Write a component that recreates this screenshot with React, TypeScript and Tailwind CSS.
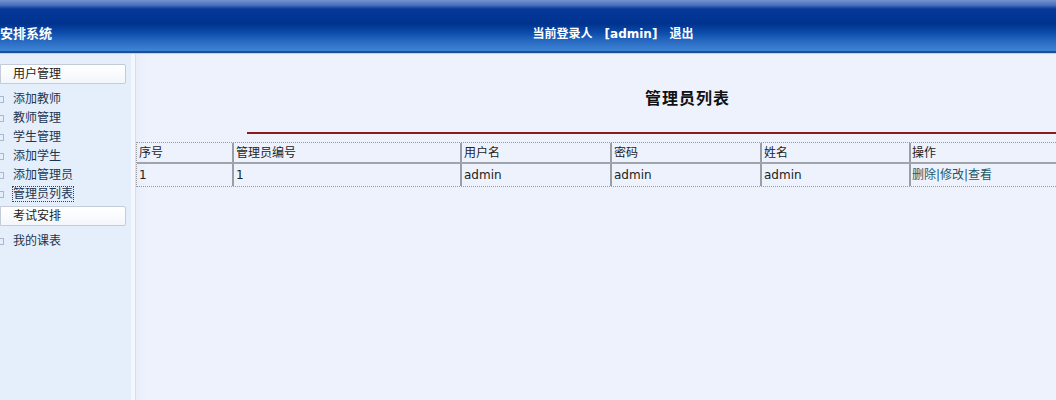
import React from "react";

const font = { fontFamily: '"DejaVu Sans", "Noto Sans CJK SC", sans-serif' };

function Bullet() {
  return <span className="inline-block w-[4px] h-[7px] border border-l-0 border-[#a9b8cc] mr-[9px] mt-[1px]" />;
}

export default function App() {
  const menu1 = ["添加教师", "教师管理", "学生管理", "添加学生", "添加管理员", "管理员列表"];
  const cols = [
    { h: "序号", v: "1", w: "w-[97px]" },
    { h: "管理员编号", v: "1", w: "w-[228px]" },
    { h: "用户名", v: "admin", w: "w-[150px]" },
    { h: "密码", v: "admin", w: "w-[150px]" },
    { h: "姓名", v: "admin", w: "w-[149px]" },
  ];
  return (
    <div className="w-[1056px] h-[400px] overflow-hidden flex flex-col bg-[#eef2fd] text-[12px] text-[#222]" style={font}>
      {/* header */}
      <div className="h-[54px] shrink-0 flex flex-col">
        <div className="h-[51px] flex items-end pb-[9px] bg-[linear-gradient(180deg,#7593cf_0px,#4a72bf_5px,#06379a_9px,#00338f_24px,#0a4aa8_32px,#2a6cc4_42px,#3c82d2_50px)]">
          <div className="w-[132px] text-white font-bold text-[13px] leading-[16px] whitespace-nowrap">安排系统</div>
          <div className="flex-1 flex justify-center pl-[38px] text-white font-bold text-[12px] leading-[16px] whitespace-nowrap">
            <span>当前登录人</span>
            <span className="ml-[12px]">[admin]</span>
            <span className="ml-[12px]">退出</span>
          </div>
        </div>
        <div className="h-[2px] bg-[#1d4f98]" />
        <div className="h-[1px] bg-[#bcd4ee]" />
      </div>
      <div className="flex flex-1">
        {/* sidebar */}
        <div className="w-[131px] shrink-0 bg-[#e5eefb] pt-[10px]">
          <div className="w-[126px] h-[20px] border border-[#c3ccd8] bg-[linear-gradient(180deg,#ffffff,#f3f6fa)] pl-[12px] leading-[18px] rounded-r-[2px]">用户管理</div>
          <div className="pt-[5px] pb-[3px]">
            {menu1.map((m, i) => (
              <div key={m} className="h-[19px] flex items-center text-[#1b3650]">
                <Bullet />
                <span className={i === 5 ? "outline outline-1 outline-dotted outline-[#444] leading-[14px]" : "leading-[14px]"}>{m}</span>
              </div>
            ))}
          </div>
          <div className="w-[126px] h-[20px] border border-[#c3ccd8] bg-[linear-gradient(180deg,#ffffff,#f3f6fa)] pl-[12px] leading-[18px] rounded-r-[2px]">考试安排</div>
          <div className="pt-[5px]">
            <div className="h-[19px] flex items-center text-[#1b3650]">
              <Bullet />
              <span>我的课表</span>
            </div>
          </div>
        </div>
        <div className="w-[4px] shrink-0 bg-[#f4f8fe]" />
        <div className="w-[1px] shrink-0 bg-[#d6dfec]" />
        {/* main */}
        <div className="flex-1 bg-[linear-gradient(90deg,#e9eefb,#eef2fd_12px)] overflow-hidden">
          <div className="h-[80px] flex flex-col">
            <div className="pt-[33px] pl-[509px] text-[16px] font-bold leading-[20px] text-[#111] tracking-[1px] whitespace-nowrap" style={{ fontFamily: '"Noto Sans CJK SC", sans-serif' }}>管理员列表</div>
            <div className="mt-[25px] ml-[111px] h-[2px] bg-[#8a1c1c]" />
          </div>
          <div className="mt-[8px] w-[1000px] border border-dotted border-[#999]">
            <div className="flex h-[21px] border-b-2 border-[#a0a4ab]">
              {cols.map((c) => (
                <div key={c.h} className={`${c.w} shrink-0 border-r-2 border-[#9a9ea6] pl-[2px] leading-[20px] whitespace-nowrap`}>{c.h}</div>
              ))}
              <div className="flex-1 pl-[1px] leading-[20px]">操作</div>
            </div>
            <div className="flex h-[22px]">
              {cols.map((c) => (
                <div key={c.h} className={`${c.w} shrink-0 border-r-2 border-[#9a9ea6] pl-[2px] leading-[22px] whitespace-nowrap`}>{c.v}</div>
              ))}
              <div className="flex-1 pl-[1px] leading-[22px] text-[#1d5868] whitespace-nowrap">删除|修改|查看</div>
            </div>
          </div>
        </div>
      </div>
    </div>
  );
}
